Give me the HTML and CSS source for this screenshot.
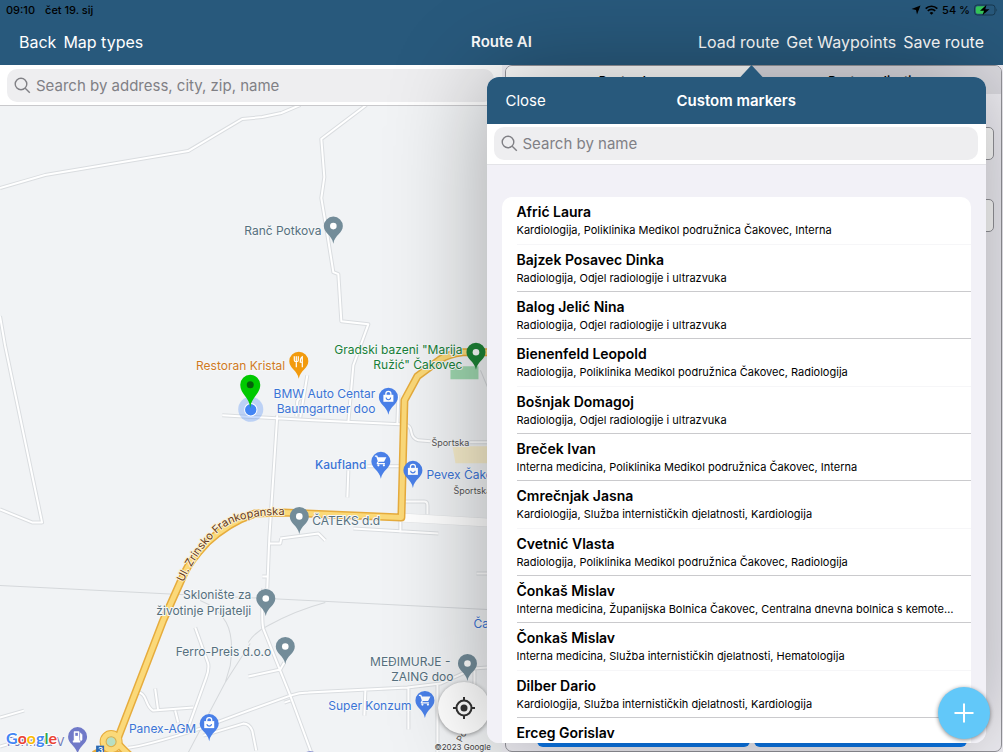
FILE: index.html
```html
<!DOCTYPE html>
<html lang="hr">
<head>
<meta charset="utf-8">
<meta name="viewport" content="width=device-width, initial-scale=1">
<title>Route AI</title>
<link rel="stylesheet" href="styles.css">
</head>
<body>
<div class="app">
  <header class="header">
    <div class="status">
      <div class="status-group"><span>09:10</span><span>čet 19. sij</span></div>
      <div class="status-right">
        <svg width="10" height="10" viewBox="0 0 10 10"><path d="M9.5.5 6 9.5 5 5 .5 4z"/></svg>
        <svg width="13" height="10" viewBox="0 0 13 10" fill="none" stroke="#000" stroke-width="1.7"><path d="M.7 3.6a8.3 8.3 0 0 1 11.6 0M2.8 5.9a5.3 5.3 0 0 1 7.4 0"/><path d="M6.5 9.8 4.6 7.9a2.7 2.7 0 0 1 3.8 0z" fill="#000" stroke="none"/></svg>
        <span>54 %</span>
        <svg width="25" height="12" viewBox="0 0 25 12"><rect x=".5" y="1" width="20.5" height="10" rx="2.8" fill="none" stroke="#17384f"/><path d="M3.5 2.3H11v7.4H3.500a1.700 1.700 0 0 1-1.700-1.700V4a1.700 1.700 0 0 1 1.700-1.700z" fill="#35c759"/><path d="M22.300 4.300v3.400q1.500-1.700 0-3.400z" fill="#17384f"/><path d="M12.500.8 6 6.800h4l-1.500 4.500L15.500 5.200h-4.200z"/></svg>
      </div>
    </div>
    <nav class="nav">
      <div class="nav-side"><button>Back</button><button>Map types</button></div>
      <h1>Route AI</h1>
      <div class="nav-side nav-end"><button>Load route</button><button>Get Waypoints</button><button>Save route</button></div>
    </nav>
  </header>

  <main class="main">
    <section class="map-col">
      <div class="searchbar">
        <label class="search">
          <svg width="17" height="17" viewBox="0 0 17 17" fill="none" stroke="#808085" stroke-width="1.400"><circle cx="7" cy="7" r="5.800"/><path d="m11.200 11.200 4.600 4.600"/></svg>
          <input type="search" placeholder="Search by address, city, zip, name" aria-label="Search by address, city, zip, name">
        </label>
      </div>
      <div class="map">
        <svg class="map-art" viewBox="0 106 501 646" preserveAspectRatio="xMinYMin slice">
          <defs>
            <path id="pin" d="M0 17.500C-1.500 9-9.500 7-9.500 0A9.500 9.500 0 1 1 9.500 0C9.500 7 1.500 9 0 17.500Z"/>
            <g id="bag"><path d="M-5-2.500H5V4.500H-5Z" fill="#fff"/><path d="M-2.500-2V-3.500a2.500 2.500 0 0 1 5 0V-2" fill="none" stroke="#fff" stroke-width="1.300"/><path d="M-2.200.3a2.200 2.200 0 0 0 4.400 0" fill="none" stroke="#4a80e8" stroke-width="1.100"/></g>
            <g id="cart" fill="#fff"><path d="M-6-4.800h2.300l.8 1.600H5.500L3.200 1.500h-5.300l-.6 1.200H4v1.200h-8l-.2-1.200 1.100-1.800L-4.600-3.600H-6z"/><circle cx="-2.500" cy="5" r="1.100"/><circle cx="3" cy="5" r="1.100"/></g>
            <g id="roads">
              <path d="M0 188 45 175 188 151 242 119 262 117 281 113 300 105M366 105 321 139 324 177 321 198 326 228 333 272 338 274 341 321 368 324 353 365 348 422M0 316 5 345 42 522 32 522 0 509"/>
              <path d="M222 415 313 420 400 424 407 425Q410 426 411 432T418 440L430 441M469 442H487M277 415 269 538 267 588M307 375 300 417M300 398Q296 399 297 405L296 416M398 395 397 423M348 470 347 497M367 466H400M403 501H424Q427 501 427 505V514M353 528 438 533M400 520V532M269 543H280L281 538M280 538 318 533 325 540"/>
              <path d="M263 588Q261 620 263 628L290 695 311 752M0 717 24 710M0 746 20 740M195 627 208 663Q209 669 206 677L188 727M138 692Q143 692 146 700T153 710L193 707M155 688 158 710M175 710 178 722M128 747Q143 746 200 728L240 713 290 695Q299 692 308 692L407 687 440 683 473 668 487 667M203 735 243 723Q249 723 252 730L256 750M248 676 280 669 284 662M365 690 364 715M408 687V729M437 683V752M476 573H487M474 670V690M262 576H267M284 702 290 700"/>
            </g>
            <path id="main-road" d="M487 352 462 352Q448 354 440 359L417 376 404 400 401 517 283 512 255 513Q228 522 207 542 190 560 184 573L163 620 118 737"/>
          </defs>
          <rect x="-10" y="96" width="3000" height="3000" fill="#f1f3f5"/>
          <path d="M450 366h28v13h-28z" fill="#9fd8b0"/><path d="M452 446h40v17h-37z" fill="#f7edcb"/>
          <g fill="none" stroke="#d5d8db" stroke-width="1"><path d="M0 585 180 594 268 598 487 609M200 600Q218 607 226 622T230 665L225 682M250 643 225 682 188 752M248 642Q255 631 268 625 295 610 325 602M480 370 490 394"/></g>
          <use href="#roads" class="road-edge"/><use href="#roads" class="road"/>
          <path d="M400 517 487 522" class="wide-edge"/><path d="M400 517 487 522" class="wide"/>
          <use href="#main-road" class="main-edge"/>
          <path d="M118 743Q122 748 132 757M94 754Q106 747 119 755" fill="none" stroke="#e6ac3d" stroke-width="8"/>
          <circle cx="111" cy="741" r="8" fill="#b8dfc2" stroke="#e6ac3d" stroke-width="7"/>
          <use href="#main-road" class="main-fill"/>
          <path d="M118 743Q122 748 132 757" fill="none" stroke="#fbd979" stroke-width="5"/>
          <circle cx="111" cy="741" r="8" fill="#b8dfc2" stroke="#fbd979" stroke-width="5"/>
          <circle cx="111" cy="741" r="5" fill="#b8dfc2" stroke="#e6ac3d" stroke-width="1"/>
          <rect x="96" y="745" width="8" height="10" fill="#2d68b2"/><text x="98" y="752" class="tiny-badge">3</text>

          <path id="street" d="M183 582Q199 548 220 530T300 515" fill="none"/>
          <text class="label street"><textPath href="#street">Ul. Zrinsko Frankopanska</textPath></text>
          <g class="label slate">
            <text x="244" y="235">Ranč Potkova</text><text x="312" y="525">ČATEKS d.d</text>
            <text x="251" y="599" text-anchor="end">Sklonište za</text><text x="251" y="614" text-anchor="end">životinje Prijatelji</text>
            <text x="271" y="655" text-anchor="end">Ferro-Preis d.o.o</text>
            <text x="450" y="665" text-anchor="end">MEĐIMURJE -</text><text x="453" y="680" text-anchor="end">ZAING doo</text>
          </g>
          <g class="label green"><text x="462" y="354" text-anchor="end">Gradski bazeni "Marija</text><text x="462" y="369" text-anchor="end">Ružić" Čakovec</text></g>
          <text class="label orange" x="285" y="370" text-anchor="end">Restoran Kristal</text>
          <g class="label blue">
            <text x="375" y="398" text-anchor="end">BMW Auto Centar</text><text x="375" y="413" text-anchor="end">Baumgartner doo</text>
            <text x="366" y="469" text-anchor="end" class="strong">Kaufland</text><text x="426" y="479">Pevex Čakovec</text>
            <text x="473" y="627">Čakovec</text><text x="411" y="709" text-anchor="end">Super Konzum</text><text x="196" y="732" text-anchor="end">Panex-AGM</text>
          </g>
          <g class="label small"><text x="431" y="446">Športska</text><text x="453" y="494">Športska</text><text x="461" y="742" transform="rotate(-60 461 742)">Po...</text></g>
          <text class="label violet" x="7" y="745">Formula V</text>

          <g fill="#738c99"><use href="#pin" x="333" y="226"/><use href="#pin" x="299" y="516"/><use href="#pin" x="265.500" y="598"/><use href="#pin" x="285" y="646"/><use href="#pin" x="467" y="663"/></g>
          <use href="#pin" x="475.500" y="352" fill="#1e8537"/>
          <g fill="#fff"><circle cx="333" cy="226" r="3.300"/><circle cx="299" cy="516" r="3.300"/><circle cx="265.500" cy="598" r="3.300"/><circle cx="285" cy="646" r="3.300"/><circle cx="467" cy="663" r="3.300"/><circle cx="475.500" cy="352" r="3.300"/></g>
          <use href="#pin" x="298.500" y="361" fill="#f29a0d"/>
          <path d="M294 356v4q0 1.500 2 1.500t2-1.500v-4M296 356v11M302 367v-10.500q-2 1-2 5.500h2" fill="none" stroke="#fff" stroke-width="1.200"/>
          <g fill="#4a80e8"><use href="#pin" x="388" y="397"/><use href="#pin" x="412.500" y="470"/><use href="#pin" x="380.500" y="461"/><use href="#pin" x="424.500" y="700"/><use href="#pin" x="209" y="723"/></g>
          <use href="#bag" x="388" y="397"/><use href="#bag" x="412.500" y="470"/><use href="#bag" x="209" y="723"/><use href="#cart" x="380.500" y="460"/><use href="#cart" x="424.500" y="699"/>
          <g fill="#7079c8"><use href="#pin" x="77.500" y="736"/><use href="#pin" x="310" y="760"/></g>
          <path d="M74 731h5v9h-5zM73 740h7v1.500h-7zM80 732l2 2v5q-1 2-2 0v-2" fill="#fff" stroke="#fff" stroke-width=".5"/><path d="M75.200 732.200h2.600v3h-2.600z" fill="#7079c8"/>
          <circle cx="250.500" cy="409" r="12.500" fill="#4285f4" fill-opacity=".3"/><circle cx="250.500" cy="409.500" r="6.200" fill="#4285f4" stroke="#fff" stroke-width="1"/>
          <path d="M250 408C249.500 397 240 394 240 384.500A10 10 0 1 1 260 384.500C260 394 250.500 397 250 408Z" fill="#00c900"/><circle cx="250" cy="384.500" r="3.500" fill="#06600c"/>
          <text class="google" x="6" y="743"><tspan fill="#4285f4">G</tspan><tspan fill="#ea4335">o</tspan><tspan fill="#fbbc05">o</tspan><tspan fill="#4285f4">g</tspan><tspan fill="#34a853">l</tspan><tspan fill="#ea4335">e</tspan></text>
          <text class="label copyright" x="434" y="749">©2023 Google</text>
        </svg>
        <button class="locate" aria-label="My location"><svg width="22" height="22" viewBox="0 0 22 22" fill="none" stroke="#333" stroke-width="2"><circle cx="11" cy="11" r="7.500"/><path d="M11 0v4M11 18v4M0 11h4M18 11h4"/><circle cx="11" cy="11" r="3.500" fill="#333" stroke="none"/></svg></button>
      </div>
    </section>

    <section class="side">
      <div class="side-card">
        <div class="segments"><button class="is-on">Route plan</button><button>Route replication</button></div>
        <div class="fields"><input type="text" aria-label="Start"><input type="text" aria-label="End"></div>
        <div class="actions"><button aria-label="Optimize"></button><button aria-label="Start route"></button></div>
      </div>
    </section>
  </main>

  <div class="popover" role="dialog" aria-labelledby="pop-title">
    <div class="popover-inner">
      <div class="popover-head"><button>Close</button><h2 id="pop-title">Custom markers</h2></div>
      <div class="searchbar">
        <label class="search">
          <svg width="17" height="17" viewBox="0 0 17 17" fill="none" stroke="#808085" stroke-width="1.400"><circle cx="7" cy="7" r="5.800"/><path d="m11.200 11.200 4.600 4.600"/></svg>
          <input type="search" placeholder="Search by name" aria-label="Search by name">
        </label>
      </div>
      <div class="list-area">
        <ul class="list">
          <li><strong>Afrić Laura</strong><span>Kardiologija, Poliklinika Medikol podružnica Čakovec, Interna</span></li>
          <li><strong>Bajzek Posavec Dinka</strong><span>Radiologija, Odjel radiologije i ultrazvuka</span></li>
          <li><strong>Balog Jelić Nina</strong><span>Radiologija, Odjel radiologije i ultrazvuka</span></li>
          <li><strong>Bienenfeld Leopold</strong><span>Radiologija, Poliklinika Medikol podružnica Čakovec, Radiologija</span></li>
          <li><strong>Bošnjak Domagoj</strong><span>Radiologija, Odjel radiologije i ultrazvuka</span></li>
          <li><strong>Breček Ivan</strong><span>Interna medicina, Poliklinika Medikol podružnica Čakovec, Interna</span></li>
          <li><strong>Cmrečnjak Jasna</strong><span>Kardiologija, Služba internističkih djelatnosti, Kardiologija</span></li>
          <li><strong>Cvetnić Vlasta</strong><span>Radiologija, Poliklinika Medikol podružnica Čakovec, Radiologija</span></li>
          <li><strong>Čonkaš Mislav</strong><span>Interna medicina, Županijska Bolnica Čakovec, Centralna dnevna bolnica s kemoterapijom</span></li>
          <li><strong>Čonkaš Mislav</strong><span>Interna medicina, Služba internističkih djelatnosti, Hematologija</span></li>
          <li><strong>Dilber Dario</strong><span>Kardiologija, Služba internističkih djelatnosti, Kardiologija</span></li>
          <li><strong>Erceg Gorislav</strong></li>
        </ul>
      </div>
    </div>
  </div>
  <button class="fab" aria-label="Add marker"><svg width="20" height="20" viewBox="0 0 20 20" stroke="#fff" stroke-width="2"><path d="M10 .5v19M.5 10h19"/></svg></button>
</div>
</body>
</html>
```
FILE: styles.css
```css
* { box-sizing: border-box; }
body { margin: 0; font-family: Inter, "Noto Sans", sans-serif; color: #000; }
button { font: inherit; color: inherit; background: none; border: 0; padding: 0; }
h1, h2, ul { margin: 0; padding: 0; }

.app { position: relative; display: flex; flex-direction: column; height: 100vh; overflow: hidden; }
.header { background: #28597c; padding-bottom: 8px; }
.status { display: flex; justify-content: space-between; align-items: center; height: 19px; padding: 0 4px 0 6px; font-size: 11px; font-weight: 500; }
.status-group { display: flex; gap: 10px; }
.status-right { display: flex; align-items: center; gap: 4px; }
.nav { display: grid; grid-template-columns: 1fr auto 1fr; align-items: center; height: 38px; padding: 8px 19px 0; color: #fff; font-size: 16px; }
.nav h1, .popover h2 { font-size: 15px; font-weight: 600; line-height: 20px; }
.nav-side { display: flex; gap: 7px; white-space: nowrap; }
.nav-end { justify-content: flex-end; }

.main { flex: 1; display: grid; grid-template-columns: 1fr 1fr; min-height: 0; }
.map-col { display: flex; flex-direction: column; min-width: 0; background: #fff; }
.searchbar { padding: 4px 8px 3px 7px; background: #fff; border-bottom: 1px solid #c9c9cc; }
.search { display: flex; align-items: center; gap: 5px; height: 33px; padding: 0 7px; border-radius: 10px; background: #eeeef0; }
.search svg { flex: none; }
.search input { flex: 1; min-width: 0; border: 0; outline: 0; padding: 0; background: none; font: inherit; font-size: 15px; }
.search input::placeholder { color: #808085; opacity: 1; }

.map { position: relative; flex: 1; min-height: 0; overflow: hidden; background: #f1f3f5; }
.map-art { display: block; width: 100%; height: 100%; }
.road-edge, .road, .wide-edge, .wide, .main-edge, .main-fill { fill: none; stroke-linejoin: round; }
.road-edge { stroke: #dadde0; stroke-width: 4px; }
.road { stroke: #fff; stroke-width: 2px; }
.wide-edge { stroke: #e3e5e7; stroke-width: 9px; }
.wide { stroke: #fff; stroke-width: 8px; }
.main-edge { stroke: #e6ac3d; stroke-width: 8px; }
.main-fill { stroke: #fbd979; stroke-width: 5px; }
.label { font-size: 12px; paint-order: stroke; stroke: #f5f7f8; stroke-width: 2px; stroke-linejoin: round; }
.slate { fill: #56707e; }
.green { fill: #188038; }
.orange { fill: #d07a1f; }
.blue { fill: #3b74d6; }
.strong { font-weight: 500; }
.small { font-size: 9px; fill: #555; }
.street { font-size: 11px; fill: #653a1c; stroke: #fdf0d0; }
.violet { fill: #7079b8; }
.copyright { font-size: 8px; fill: #444; }
.tiny-badge { font-size: 8px; fill: #fff; font-weight: 600; }
.google { font-size: 16px; font-family: Lato, sans-serif; font-weight: 700; paint-order: stroke; stroke: #fff; stroke-width: 2px; }
.locate { position: absolute; right: 12px; bottom: 19px; display: grid; place-items: center; width: 52px; height: 52px; border-radius: 50%; background: #fff; box-shadow: 0 1px 4px #0006; }

.side { min-width: 0; padding: 0 1px 1px 3px; background: #f2f1f7; }
.side-card { display: flex; flex-direction: column; height: 100%; border: 1px solid #96969c; border-radius: 7px; overflow: hidden; }
.segments { display: grid; grid-template-columns: 1fr 1fr; height: 28px; background: #dedde3; font-size: 12px; font-weight: 600; }
.segments .is-on { background: #fff; }
.fields { flex: 1; display: grid; align-content: start; gap: 39px; padding: 33px 7px 0; }
.fields input { height: 33px; border: 1px solid #96969c; border-radius: 5px; background: #fff; }
.actions { display: grid; grid-template-columns: 1fr 1fr; gap: 4px; padding: 0 34px 4px 31px; }
.actions button { height: 36px; border-radius: 6px; background: #0b78ea; }

.popover { position: absolute; top: 77px; right: 17px; bottom: 9px; width: calc(50% - 2px); border-radius: 12px; box-shadow: 0 0 100px #0005; }
.popover::before { content: ""; position: absolute; left: 253px; top: -12px; width: 24px; height: 13px; background: #28597c; clip-path: polygon(50% 0, 100% 100%, 0 100%); }
.popover-inner { position: relative; display: flex; flex-direction: column; height: 100%; overflow: hidden; border-radius: 12px; background: #f2f1f7; }
.popover-head { display: grid; grid-template-columns: 1fr auto 1fr; align-items: center; flex: none; height: 47px; padding: 0 19px; background: #28597c; color: #fff; font-size: 15px; }
.popover-head button { justify-self: start; }
.popover .searchbar { flex: none; padding: 3px 8px 4px 7px; border-color: #e4e4e8; }
.list-area { flex: 1; min-height: 0; overflow: hidden; padding: 32px 15px 0; }
.list { list-style: none; border-radius: 10px; background: #fff; overflow: hidden; padding-left: 15px; }
.list li { display: flex; flex-direction: column; height: 47px; padding: 5px 15px 0 0; border-bottom: 1px solid #cacacd; }
.list li:nth-child(3n + 1) { height: 48px; border-bottom-color: #f6f6f8; }
.list li:last-child { border: 0; }
.list strong { font-size: 14px; line-height: 20px; font-weight: 600; }
.list span { font-size: 11px; line-height: 16px; white-space: nowrap; overflow: hidden; text-overflow: ellipsis; }
.fab { position: absolute; right: 13px; bottom: 13px; display: grid; place-items: center; width: 52px; height: 52px; border-radius: 50%; background: #62c8f9; box-shadow: 0 1px 4px #0007; }
```
